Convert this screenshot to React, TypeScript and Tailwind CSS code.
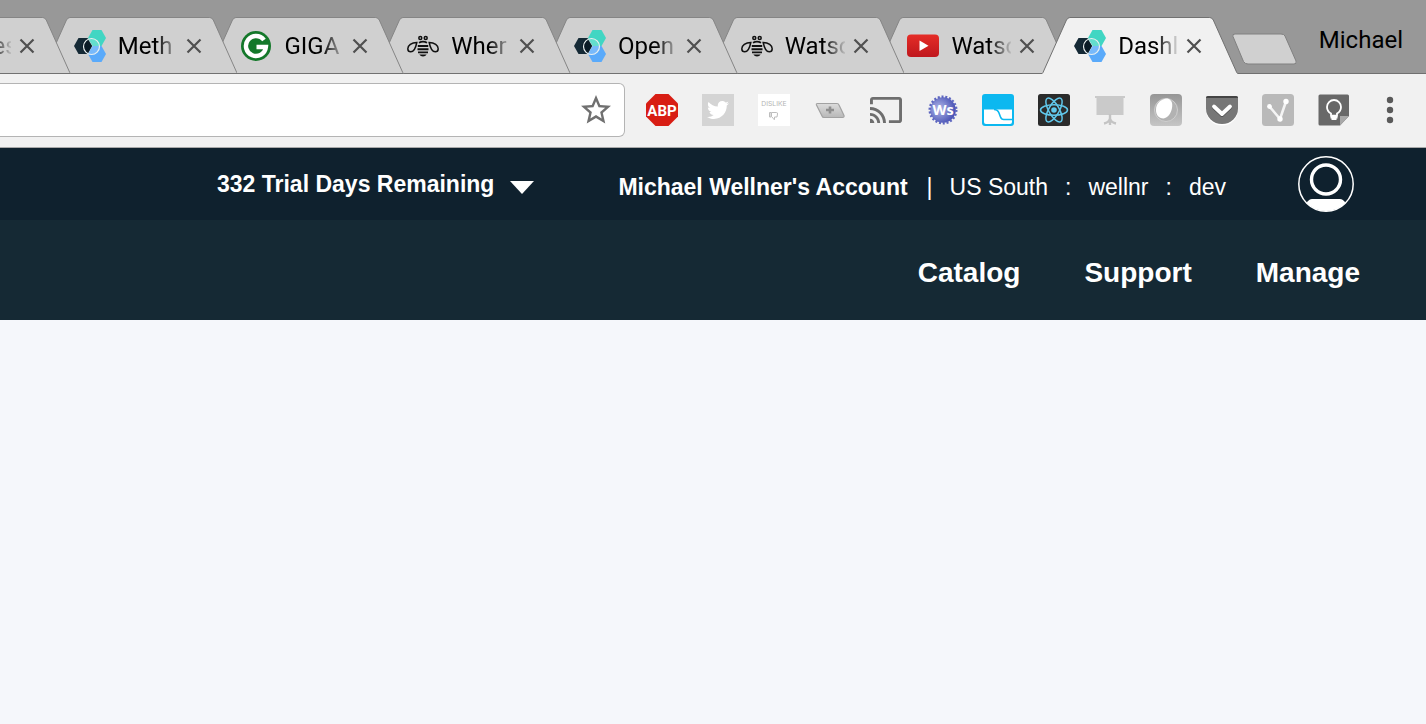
import type { ReactNode } from "react";
import { FaTwitter } from "react-icons/fa";
import { MdStarBorder } from "react-icons/md";

function HexFavicon() {
  return (
    <svg viewBox="0 0 32 32" className="size-8">
      <path d="M18.5 0h9l4.5 8-4.5 8h-9L14 8z" fill="#41d6c3" />
      <path d="M18.5 16h9l4.5 8-4.5 8h-9L14 24z" fill="#5aaafa" />
      <path d="M4.500 8h9L18 16l-4.500 8h-9L0 16z" fill="#152935" />
      <circle cx="17.500" cy="16.500" r="8" fill="#fff" fillOpacity="0.18" />
      <path d="M13.500 9L18 16l-4.500 8A8 8 0 0 1 13.500 9z" fill="#0a1b26" />
      <circle cx="17.500" cy="16.500" r="8" fill="none" stroke="#e8efef" strokeWidth="1.200" />
    </svg>
  );
}

function GFavicon() {
  return (
    <svg viewBox="0 0 32 32" className="size-8">
      <circle cx="16" cy="16" r="15" fill="#14782a" />
      <path d="M24 10A10 10 0 1 0 25.900 17H16.500" fill="none" stroke="#fff" strokeWidth="4.400" />
    </svg>
  );
}

function BeeFavicon() {
  return (
    <svg viewBox="0 0 32 32" className="size-8" fill="none" stroke="#111" strokeWidth="1.500">
      <circle cx="13.300" cy="8" r="1.500" />
      <circle cx="18.700" cy="8" r="1.500" />
      <path d="M12 12.800q4-2.200 8 0" strokeWidth="1.800" />
      <path d="M10.800 16h10.400M10.500 19.200h11M11 22.400h10" strokeWidth="1.900" />
      <path d="M12.300 24.500h7.400q-1.300 2-3.700 2t-3.700-2z" fill="#111" stroke="none" />
      <path d="M9.800 12.500C4.500 12.500.8 15.500.8 18.700c0 2 1.200 3.100 3 3.100 3.200 0 4.800-3.300 6-9.300zM22.200 12.500c5.300 0 9 3 9 6.200 0 2-1.200 3.100-3 3.100-3.200 0-4.800-3.300-6-9.300z" />
    </svg>
  );
}

function VideoFavicon() {
  return (
    <svg viewBox="0 0 32 32" className="size-8">
      <defs>
        <linearGradient id="video-red" x1="0" y1="0" x2="0" y2="1">
          <stop offset="0" stopColor="#e52d27" />
          <stop offset="1" stopColor="#bf171d" />
        </linearGradient>
      </defs>
      <rect x="0" y="4.500" width="32" height="22.500" rx="4" fill="url(#video-red)" />
      <path d="M12.500 10.500v10.500l9-5.200z" fill="#fff" />
    </svg>
  );
}

type Tab = { title: string; icon: ReactNode; z: string; active?: boolean };

const tabs: Tab[] = [
  { title: "Pages", icon: <HexFavicon />, z: "z-[8]" },
  { title: "Meth", icon: <HexFavicon />, z: "z-[7]" },
  { title: "GIGA", icon: <GFavicon />, z: "z-[6]" },
  { title: "Wher", icon: <BeeFavicon />, z: "z-[5]" },
  { title: "Open", icon: <HexFavicon />, z: "z-[4]" },
  { title: "Watso", icon: <BeeFavicon />, z: "z-[3]" },
  { title: "Watso", icon: <VideoFavicon />, z: "z-[2]" },
  { title: "Dashl", icon: <HexFavicon />, z: "z-[9]", active: true },
];

function BrowserTab({ tab }: { tab: Tab }) {
  return (
    <li className={`relative h-[57px] min-w-0 flex-1 ${tab.z}`}>
      <div className="relative -mr-[29px] flex h-full items-center pl-8">
        <svg viewBox="0 0 196 57" preserveAspectRatio="none" className="absolute inset-0 size-full">
          <path
            d="M0 57L1 55.500L24.500 3Q26 .5 28 .5H168Q170 .5 171.500 3L195 55.500L196 57z"
            fill={tab.active ? "#f1f1f1" : "#d0d0d0"}
          />
          <path
            d="M0 56.500L1 55.500L24.500 3Q26 .5 28 .5H168Q170 .5 171.500 3L195 55.500L196 56.500"
            fill="none"
            stroke={tab.active ? "#707070" : "#858585"}
          />
          {!tab.active && <path d="M0 56.500H196" stroke="#707070" />}
        </svg>
        <button type="button" className="relative flex items-center gap-3">
          {tab.icon}
          <span className="w-[60px] overflow-hidden whitespace-nowrap text-left text-2xl text-black [mask-image:linear-gradient(to_right,black_38px,transparent_62px)]">
            {tab.title}
          </span>
        </button>
        <button type="button" aria-label="Close tab" className="relative ml-2">
          <svg viewBox="0 0 16 16" className="size-4" stroke="#505050" strokeWidth="2.200">
            <path d="M1.500 1.500l13 13M14.500 1.500l-13 13" />
          </svg>
        </button>
      </div>
    </li>
  );
}

const extensions: { name: string; icon: ReactNode }[] = [
  {
    name: "Ad blocker",
    icon: (
      <>
        <path d="M9.500 0h13L32 9.500v13L22.500 32h-13L0 22.500v-13z" fill="#d81e14" />
        <text x="16" y="22" textAnchor="middle" fontFamily="Roboto" fontWeight="700" fontSize="15" fill="#fff">
          ABP
        </text>
      </>
    ),
  },
  {
    name: "Twitter",
    icon: (
      <>
        <path d="M0 0h32v32H0z" fill="#d4d4d4" />
        <g transform="translate(5 5)">
          <FaTwitter size={22} color="#fff" className="size-[22px]" />
        </g>
      </>
    ),
  },
  {
    name: "Dislike",
    icon: (
      <>
        <path d="M0 0h32v32H0z" fill="#fff" />
        <text x="16" y="12" textAnchor="middle" fontFamily="Inter" fontSize="6.800" fill="#b4b4b4">
          DISLIKE
        </text>
        <path
          d="M11.500 18.500h1.500v4.500h-1.500zM13.500 18.500h5q1.200 0 1 1.500l-.5 3h-2.500v2.500q-1 0-1.200-1l-1.800-2z"
          fill="none"
          stroke="#bdbdbd"
        />
      </>
    ),
  },
  {
    name: "New item",
    icon: (
      <>
        <defs>
          <linearGradient id="new-item" x1="0" y1="0" x2="0" y2="1">
            <stop offset="0" stopColor="#dcdcdc" />
            <stop offset="1" stopColor="#b8b8b8" />
          </linearGradient>
        </defs>
        <path
          d="M3.500 9.500H23q1.500 0 2 1.500l5 10.500q.5 2-1.500 2H10q-1.500 0-2-1.500L2.500 11q-.5-1.500 1-1.500z"
          fill="url(#new-item)"
          stroke="#a2a2a2"
          strokeWidth="1.200"
        />
        <path d="M16 12.500v7M12 16h8" stroke="#8e8e8e" strokeWidth="2.600" />
      </>
    ),
  },
  {
    name: "Cast",
    icon: (
      <path
        transform="scale(1.4545) translate(-1 -1)"
        fill="#6e6e6e"
        d="M21 3H3c-1.100 0-2 .9-2 2v3h2V5h18v14h-7v2h7c1.100 0 2-.9 2-2V5c0-1.100-.9-2-2-2zM1 18v3h3c0-1.660-1.340-3-3-3zm0-4v2c2.760 0 5 2.240 5 5h2c0-3.870-3.130-7-7-7zm0-4v2c4.970 0 9 4.030 9 9h2c0-6.080-4.930-11-11-11z"
      />
    ),
  },
  {
    name: "WebStorm",
    icon: (
      <>
        <defs>
          <radialGradient id="seal" cx="0.350" cy="0.450" r="0.650">
            <stop offset="0" stopColor="#b2b8e8" />
            <stop offset="1" stopColor="#4650b4" />
          </radialGradient>
        </defs>
        <circle cx="17" cy="16" r="12.800" fill="url(#seal)" />
        <circle cx="17" cy="16" r="13.300" fill="none" stroke="#5d66c0" strokeWidth="2.400" strokeDasharray="2 1.799" />
        <text x="17" y="21" textAnchor="middle" fontFamily="Open Sans" fontWeight="700" fontSize="14.500" fill="#fff">
          Ws
        </text>
      </>
    ),
  },
  {
    name: "Tab shape",
    icon: (
      <>
        <rect width="32" height="32" rx="3" fill="#0cb8f0" />
        <path d="M2 15.500H30V28q0 2-2 2H4q-2 0-2-2z" fill="#fff" />
        <path
          d="M12 15.500c3 0 4.300 1.500 5 3.500l1.400 3.800c.7 2 1.500 2.700 3.300 2.700H30"
          fill="none"
          stroke="#0cb8f0"
          strokeWidth="1.600"
        />
      </>
    ),
  },
  {
    name: "React",
    icon: (
      <>
        <rect width="32" height="32" rx="2.500" fill="#2b2b2b" />
        <g fill="none" stroke="#61c8ec" strokeWidth="1.500">
          <ellipse cx="16" cy="16" rx="13.500" ry="5.200" />
          <ellipse cx="16" cy="16" rx="13.500" ry="5.200" transform="rotate(60 16 16)" />
          <ellipse cx="16" cy="16" rx="13.500" ry="5.200" transform="rotate(120 16 16)" />
        </g>
        <circle cx="16" cy="16" r="2.800" fill="#61c8ec" />
      </>
    ),
  },
  {
    name: "Presentation",
    icon: (
      <>
        <path d="M1 2h30v2h-1.500v17h-27V4H1z" fill="#cacaca" />
        <path d="M16 20v11M16 24.500q-1 4-6 5M16 24.500q1 4 6 5" fill="none" stroke="#c4c4c4" strokeWidth="2.400" />
      </>
    ),
  },
  {
    name: "Lens",
    icon: (
      <>
        <defs>
          <linearGradient id="lens" x1="0" y1="0" x2="0" y2="1">
            <stop offset="0" stopColor="#969696" />
            <stop offset="1" stopColor="#c6c6c6" />
          </linearGradient>
        </defs>
        <rect width="32" height="32" rx="4" fill="url(#lens)" />
        <circle cx="16" cy="16" r="11.500" fill="#b2b2b2" stroke="#d6d6d6" strokeWidth=".8" />
        <path d="M6 16C6 9 11 5 17.500 4.500 21.500 5.500 23 9 22 14c-1 5.500-4 9.500-8.500 10.500C8.500 24 6 21 6 16z" fill="#fff" />
      </>
    ),
  },
  {
    name: "Pocket",
    icon: (
      <>
        <path d="M0 4.500h32V16a16 15.500 0 0 1-32 0z" fill="#fff" />
        <path d="M0 4q0-2 2-2h28q2 0 2 2v10.500a16 15.500 0 0 1-32 0z" fill="#777" />
        <path d="M0 4q0-2 2-2h28q2 0 2 2z" fill="#444" />
        <path d="M8 13.500l8 7.500 8-7.500" fill="none" stroke="#555" strokeWidth="4" strokeLinecap="round" strokeLinejoin="round" />
        <path d="M8 12.500l8 7.500 8-7.500" fill="none" stroke="#fff" strokeWidth="3.800" strokeLinecap="round" strokeLinejoin="round" />
      </>
    ),
  },
  {
    name: "Chart points",
    icon: (
      <>
        <rect width="32" height="32" rx="3.500" fill="#b9b9b9" />
        <path d="M7.500 12.500L18 25l6-17.500" fill="none" stroke="#f4f4f4" strokeWidth="2.600" />
        <circle cx="7.500" cy="12.500" r="2.400" fill="#fff" />
        <circle cx="18" cy="25" r="2.700" fill="#fff" />
        <circle cx="24" cy="7.500" r="2.700" fill="#fff" />
      </>
    ),
  },
  {
    name: "Keep",
    icon: (
      <>
        <path d="M2 .5h27.500q1.500 0 1.500 1.500v20l-9 9.500H2Q.5 31.500.5 30V2Q.5.500 2 .5z" fill="#686868" />
        <path d="M22 31.500V22h9z" fill="#a8a8a8" />
        <path
          d="M13 19.500c-2.500-1.300-4-3.500-4-6.500a7 7 0 0 1 14 0c0 3-1.500 5.200-4 6.500v2.200h-6z"
          fill="none"
          stroke="#fff"
          strokeWidth="1.800"
        />
        <path d="M12.500 22h7v2.500h-7zM13.500 24.500h5V26h-5z" fill="#fff" />
      </>
    ),
  },
  {
    name: "Menu",
    icon: (
      <g fill="#5a5a5a">
        <circle cx="16" cy="6" r="3.200" />
        <circle cx="16" cy="16" r="3.200" />
        <circle cx="16" cy="26" r="3.200" />
      </g>
    ),
  },
];

function TabStrip() {
  return (
    <div className="flex h-[74px] items-end bg-[#989898] shadow-[inset_0_-1px_0_#707070]">
      <ul className="-ml-[125px] flex min-w-0 flex-1">
        {tabs.map((tab, i) => (
          <BrowserTab key={i} tab={tab} />
        ))}
      </ul>
      <button type="button" aria-label="New tab" className="mb-[9px] ml-[22px]">
        <svg viewBox="0 0 67 32" className="h-8 w-[67px]">
          <path
            d="M4 1H50Q53 1 54 3L65 28Q66 31 63 31H17Q14 31 12.500 28.500L2 3.500Q1 1 4 1z"
            fill="#d0d0d0"
            stroke="#808080"
          />
        </svg>
      </button>
      <button type="button" className="mr-[23px] mb-[18px] ml-[21px] text-2xl text-black">
        Michael
      </button>
    </div>
  );
}

function Toolbar() {
  return (
    <div className="flex h-[74px] items-center gap-[21px] border-b border-[#a9a9a9] bg-[#f1f1f1] pr-5 pb-0.5">
      <div className="flex h-[54px] min-w-0 flex-1 items-center rounded-r-md border border-l-0 border-[#b4b4b4] bg-white pr-[10px]">
        <input type="text" aria-label="Address" className="h-full min-w-0 flex-1 bg-transparent px-3 text-2xl outline-none" />
        <button type="button" aria-label="Bookmark this page" className="text-[#707070]">
          <MdStarBorder size={36} />
        </button>
      </div>
      <div className="flex items-center gap-6">
        {extensions.map((ext) => (
          <button key={ext.name} type="button" aria-label={ext.name}>
            <svg viewBox="0 0 32 32" className="size-8">
              {ext.icon}
            </svg>
          </button>
        ))}
      </div>
    </div>
  );
}

function AccountBar() {
  return (
    <div className="flex h-[72px] items-center justify-end bg-[#0f212e] pr-[72px] text-[23px] text-white">
      <button type="button" className="flex items-center gap-4 font-bold">
        332 Trial Days Remaining
        <svg viewBox="0 0 24 13" className="mt-[6px] h-[13px] w-6">
          <path d="M0 0h24L12 13z" fill="#fff" />
        </svg>
      </button>
      <button type="button" className="mt-1.5 ml-[84px] flex items-center gap-[17px]">
        <span className="mr-0.5 font-bold">Michael Wellner's Account</span>
        <span>|</span>
        <span>US South</span>
        <span>:</span>
        <span>wellnr</span>
        <span>:</span>
        <span>dev</span>
      </button>
      <button type="button" aria-label="Profile" className="ml-[72px]">
        <svg viewBox="0 0 56 56" className="size-14">
          <circle cx="28" cy="28" r="27.200" fill="none" stroke="#fff" strokeWidth="1.500" />
          <circle cx="28" cy="23.500" r="14.500" fill="none" stroke="#fff" strokeWidth="3.400" />
          <path d="M8.500 47Q11 43 14 43H42Q45 43 47.500 47A27.500 27.500 0 0 1 8.500 47z" fill="#fff" />
        </svg>
      </button>
    </div>
  );
}

function MainNav() {
  return (
    <nav className="flex h-[100px] items-center justify-end gap-16 bg-[#152934] pt-1.5 pr-[66px] text-[28px] font-bold text-white">
      <a href="#catalog">Catalog</a>
      <a href="#support">Support</a>
      <a href="#manage">Manage</a>
    </nav>
  );
}

export default function App() {
  return (
    <div className="flex min-h-screen flex-col overflow-hidden bg-[#f5f7fb]">
      <div className="font-['Roboto',sans-serif]">
        <TabStrip />
        <Toolbar />
      </div>
      <header className="font-['Liberation_Sans',Arial,sans-serif]">
        <AccountBar />
        <MainNav />
      </header>
      <main className="flex-1" />
    </div>
  );
}
